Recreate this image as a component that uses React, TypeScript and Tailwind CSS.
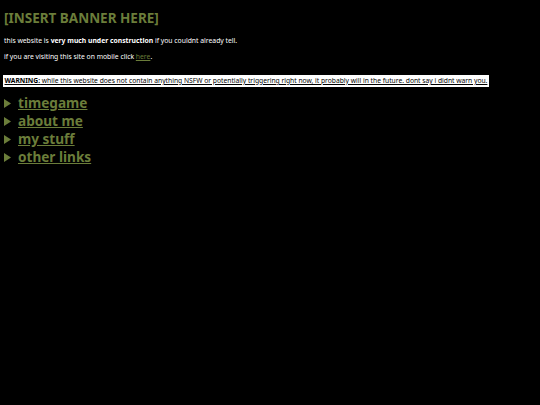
export default function App() {
  const links = ['timegame', 'about me', 'my stuff', 'other links'];
  return (
    <div className="min-h-screen w-full bg-black px-[4px] pt-[8px] text-white" style={{ fontFamily: '"Noto Sans", "Open Sans", sans-serif' }}>
      <h1 className="text-[13.5px] font-bold leading-[20px] text-[#6b7d3a]">[INSERT BANNER HERE]</h1>
      <p className="mt-[8px] text-[6.8px] leading-[10px]">
        this website is <b>very much under construction</b> if you couldnt already tell.
      </p>
      <p className="mt-[6px] text-[6.8px] leading-[10px]">
        if you are visiting this site on mobile click <a className="text-[#6b7d3a] underline">here</a>.
      </p>
      <div className="mt-[13px] -ml-[1px] inline-block bg-white px-[1.5px] text-[6.72px] leading-[12px] text-black underline">
        <b>WARNING:</b> while this website does not contain anything NSFW or potentially triggering right now, it probably will in the future. dont say i didnt warn you.
      </div>
      <div className="mt-[5px] flex flex-col">
        {links.map((l) => (
          <div key={l} className="flex items-center text-[13.6px] font-bold leading-[18px] text-[#6b7d3a]">
            <svg className="mr-[7px] h-[9px] w-[7px]" viewBox="0 0 7 9">
              <polygon points="0,0 7,4.5 0,9" fill="#6b7d3a" />
            </svg>
            <span className="underline">{l}</span>
          </div>
        ))}
      </div>
    </div>
  );
}
